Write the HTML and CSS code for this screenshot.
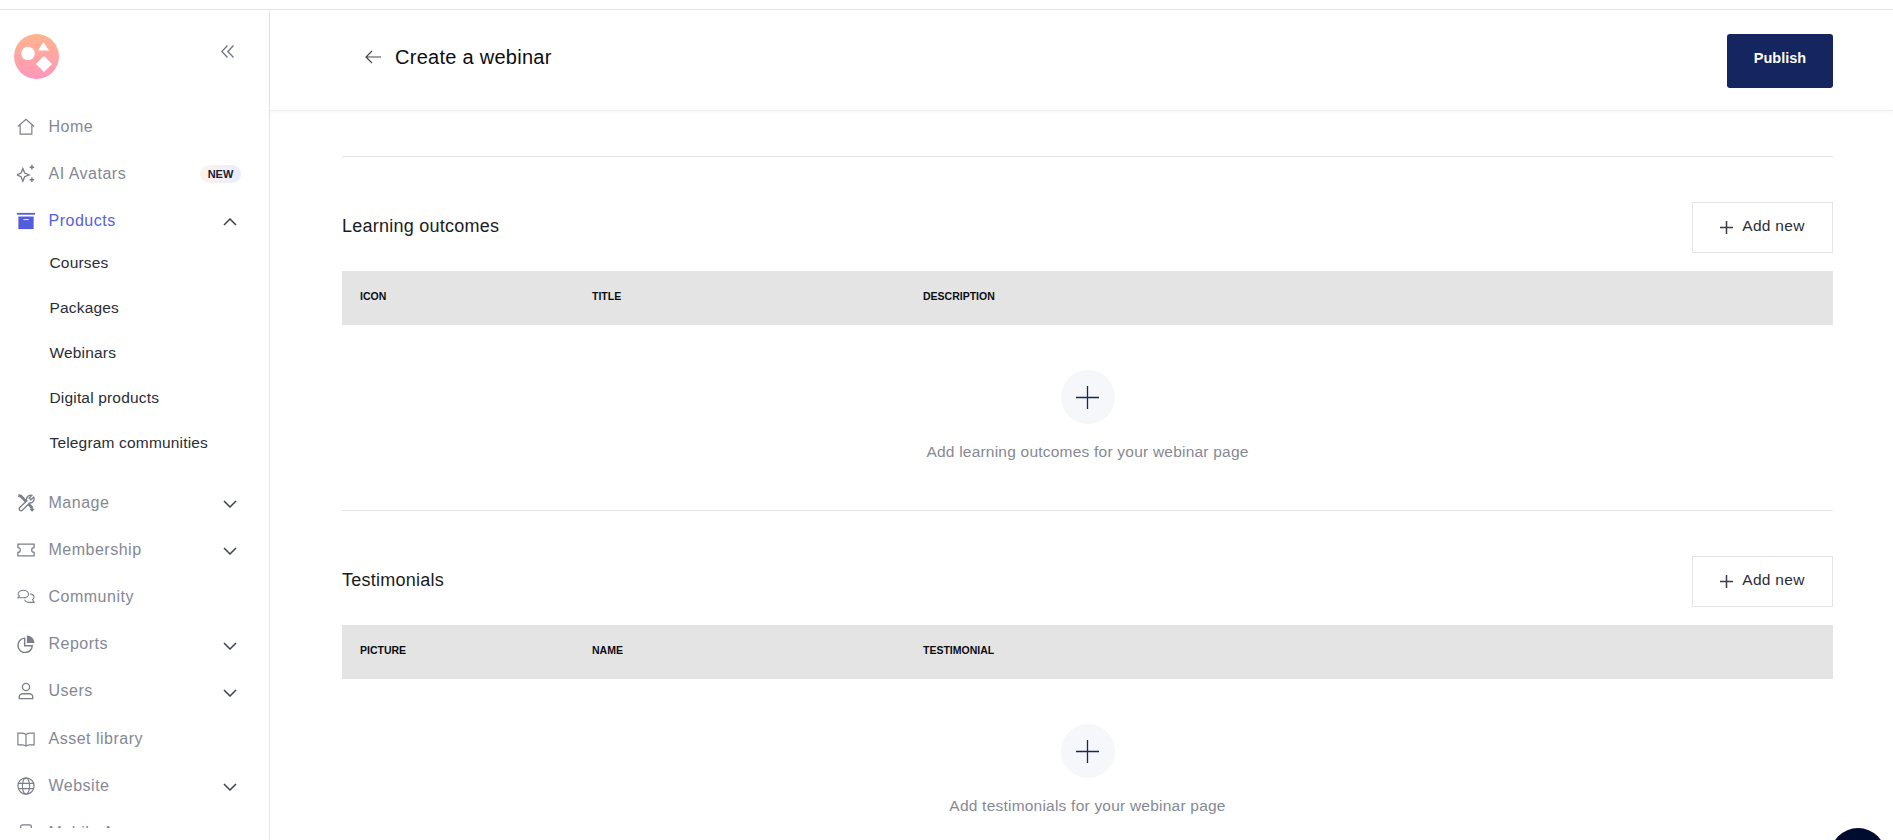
FILE: index.html
```html
<!DOCTYPE html>
<html lang="en">
<head>
<meta charset="utf-8">
<title>Create a webinar</title>
<link rel="stylesheet" href="styles.css">
</head>
<body>
<div class="app">
  <aside class="sidebar">
    <div class="brand">
      <svg class="logo" width="45" height="45" viewBox="0 0 45 45">
        <defs><linearGradient id="lg" x1="0" y1="0" x2="0" y2="1"><stop offset="0" stop-color="#ffb48c"/><stop offset="1" stop-color="#ff97bd"/></linearGradient></defs>
        <circle cx="22.5" cy="22.5" r="22.5" fill="url(#lg)"/>
        <circle cx="14" cy="19.500" r="6.800" fill="#fff"/>
        <path d="M29.500 8l5.500 8.500H24z" fill="#fff"/>
        <path d="M30 22l8 8-8 8-8-8z" fill="#fff"/>
      </svg>
      <svg class="collapse" width="13" height="13" viewBox="0 0 13 13" fill="none" stroke="#6f7480" stroke-width="1.300"><path d="M6.500 .5L.8 6.500l5.700 6M12.500 .5L6.800 6.500l5.700 6"/></svg>
    </div>
    <nav class="nav">
      <a class="item"><svg class="ico" viewBox="0 0 20 20" fill="none" stroke="#7b7f8a" stroke-width="1.300"><path d="M1 9.500L10 1.500l9 8M3.500 8v10h13V8"/></svg><span>Home</span></a>
      <a class="item"><svg class="ico" viewBox="0 0 20 20" fill="none" stroke="#7b7f8a" stroke-width="1.500"><path d="M6.500 4l2 5 5 2-5 2-2 5-2-5-5-2 5-2z"/><path d="M16.500 0v5M14 2.500h5M16.500 14v5M14 16.500h5" stroke-width="1.700"/></svg><span>AI Avatars</span><b class="badge">NEW</b></a>
      <a class="item active"><svg class="ico" viewBox="0 0 20 20"><path d="M0 1h20v2H0z" fill="#525ddc"/><path d="M1.500 5h17v14h-17z" fill="#525ddc"/><path d="M7 8h6v1H7z" fill="#fff"/></svg><span>Products</span><svg class="chev" viewBox="0 0 14 8" fill="none" stroke="#3c4152" stroke-width="1.500"><path d="M1 7l6-6 6 6"/></svg></a>
      <div class="sub">
        <a class="subitem">Courses</a>
        <a class="subitem">Packages</a>
        <a class="subitem">Webinars</a>
        <a class="subitem">Digital products</a>
        <a class="subitem">Telegram communities</a>
      </div>
      <a class="item"><svg class="ico" viewBox="0 0 20 20" fill="none" stroke="#7b7f8a"><path d="M1.500 1.500l3 1 12.500 13" stroke-width="3"/><path d="M15.500 16l2.500 2.500" stroke-width="3.500"/><path d="M18.500 3.500l-3 3-2-2 3-3a4.500 4.500 0 0 0-5.500 6L3 15a2 2 0 0 0 3 3l8-8a4.500 4.500 0 0 0 4.500-6.500z" stroke-width="1.500" fill="#fff"/></svg><span>Manage</span><svg class="chev" viewBox="0 0 14 8" fill="none" stroke="#3c4152" stroke-width="1.500"><path d="M1 1l6 6 6-6"/></svg></a>
      <a class="item"><svg class="ico" viewBox="0 0 20 20" fill="none" stroke="#7b7f8a" stroke-width="1.400"><path d="M1 3.500h18v3.800a2.700 2.700 0 0 0 0 5.400v3.800H1v-3.800a2.700 2.700 0 0 0 0-5.400z"/></svg><span>Membership</span><svg class="chev" viewBox="0 0 14 8" fill="none" stroke="#3c4152" stroke-width="1.500"><path d="M1 1l6 6 6-6"/></svg></a>
      <a class="item"><svg class="ico" viewBox="0 0 20 20" fill="none" stroke="#7b7f8a" stroke-width="1.200"><path d="M7 2.500c3.300 0 5.800 1.800 5.800 4.200s-2.500 4.200-5.800 4.200H1l1.700-2.100C1.700 8.100 1.200 7.400 1.200 6.700 1.200 4.300 3.700 2.500 7 2.500z"/><path d="M14.500 6.500c2.700.3 4.500 1.700 4.500 3.600 0 1.100-.6 2-1.700 2.700l1.700 3.200h-5.500c-2.500 0-4.500-1.200-5-3"/></svg><span>Community</span></a>
      <a class="item"><svg class="ico" viewBox="0 0 20 20" fill="none" stroke="#7b7f8a" stroke-width="1.600"><path d="M8.500 3.500a8 8 0 1 0 8.500 8.500H8.500z"/><path d="M11 .5a8.500 8.500 0 0 1 8.500 8.500H11z" fill="#7b7f8a" stroke="none"/></svg><span>Reports</span><svg class="chev" viewBox="0 0 14 8" fill="none" stroke="#3c4152" stroke-width="1.500"><path d="M1 1l6 6 6-6"/></svg></a>
      <a class="item"><svg class="ico" viewBox="0 0 20 20" fill="none" stroke="#7b7f8a" stroke-width="1.500"><circle cx="10" cy="5.500" r="4"/><path d="M2.500 18.500v-2c0-2 2-3.500 4-3.500h7c2 0 4 1.500 4 3.500v2z"/></svg><span>Users</span><svg class="chev" viewBox="0 0 14 8" fill="none" stroke="#3c4152" stroke-width="1.500"><path d="M1 1l6 6 6-6"/></svg></a>
      <a class="item"><svg class="ico" viewBox="0 0 20 20" fill="none" stroke="#7b7f8a" stroke-width="1.300"><path d="M10 5c-1.500-1-3-1.500-5-1.500H1v13h5c1.600 0 3 .5 4 1.500 1-1 2.400-1.500 4-1.500h5v-13h-4c-2 0-3.500.5-5 1.500zM10 5v12"/></svg><span>Asset library</span></a>
      <a class="item"><svg class="ico" viewBox="0 0 20 20" fill="none" stroke="#7b7f8a" stroke-width="1.300"><circle cx="10" cy="10" r="9"/><ellipse cx="10" cy="10" rx="4" ry="9"/><path d="M1.500 7h17M1.500 13h17"/></svg><span>Website</span><svg class="chev" viewBox="0 0 14 8" fill="none" stroke="#3c4152" stroke-width="1.500"><path d="M1 1l6 6 6-6"/></svg></a>
      <a class="item"><svg class="ico" viewBox="0 0 20 20" fill="none" stroke="#7b7f8a" stroke-width="1.400"><rect x="4" y="1" width="12" height="18" rx="2"/></svg><span>Mobile App</span></a>
    </nav>
  </aside>
  <main class="main">
    <header class="topbar">
      <div class="title">
        <svg class="back" width="16" height="14" viewBox="0 0 16 14" fill="none" stroke="#444850" stroke-width="1.200"><path d="M7 1L1 7l6 6M1 7h15"/></svg>
        <h1>Create a webinar</h1>
      </div>
      <button class="publish">Publish</button>
    </header>
    <div class="content">
      <section class="block">
        <div class="block-head">
          <h2>Learning outcomes</h2>
          <button class="add"><svg width="13" height="13" viewBox="0 0 13 13" stroke="#3a3d45" stroke-width="1.500"><path d="M6.500 0v13M0 6.500h13"/></svg><span class="add-label">Add new</span></button>
        </div>
        <div class="thead"><span>ICON</span><span>TITLE</span><span>DESCRIPTION</span></div>
        <div class="empty">
          <div class="circle"><svg width="23" height="23" viewBox="0 0 23 23" stroke="#1b2560" stroke-width="1.300"><path d="M11.500 0v23M0 11.500h23"/></svg></div>
          <p>Add learning outcomes for your webinar page</p>
        </div>
      </section>
      <section class="block">
        <div class="block-head">
          <h2>Testimonials</h2>
          <button class="add"><svg width="13" height="13" viewBox="0 0 13 13" stroke="#3a3d45" stroke-width="1.500"><path d="M6.500 0v13M0 6.500h13"/></svg><span class="add-label">Add new</span></button>
        </div>
        <div class="thead"><span>PICTURE</span><span>NAME</span><span>TESTIMONIAL</span></div>
        <div class="empty">
          <div class="circle"><svg width="23" height="23" viewBox="0 0 23 23" stroke="#1b2560" stroke-width="1.300"><path d="M11.500 0v23M0 11.500h23"/></svg></div>
          <p>Add testimonials for your webinar page</p>
        </div>
      </section>
    </div>
  </main>
</div>
<div class="chat"></div>
</body>
</html>
```
FILE: styles.css
```css
* { box-sizing: border-box; }
html, body { margin: 0; height: 100%; overflow: hidden; background: #fff; }
body { font-family: "Liberation Sans", Arial, sans-serif; color: #14161c; padding-top: 9px; }
h1, h2, p { margin: 0; font-weight: 400; }
.app { display: flex; height: 831px; border-top: 1px solid #e4e4e4; }
.sidebar { width: 270px; flex: none; border-right: 1px solid #e4e4e4; padding-bottom: 12px; display: flex; flex-direction: column; margin-top: 1px; }
.brand { height: 92px; flex: none; display: flex; align-items: flex-start; justify-content: space-between; padding: 23px 35px 0 14px; }
.collapse { margin-top: 11px; }
.nav { flex: 1; overflow: hidden; }
.item { display: flex; align-items: center; height: 47.200px; padding: 0 32px 0 17px; font-size: 16px; letter-spacing: .5px; color: #848894; }
.ico { width: 18px; height: 18px; flex: none; margin-right: 13.500px; }
.item span { flex: 1; }
.chev { width: 14px; height: 8px; flex: none; margin-top: 3px; }
.active { color: #5660e2; }
.badge { width: 41px; height: 18px; line-height: 18px; margin-right: -4px; text-align: center; border-radius: 9px; font-size: 11px; letter-spacing: 0; color: #1c2030; background: linear-gradient(90deg, #fdf3ea, #e8edfd); }
.sub { margin: -4px 0 13.500px; }
.subitem { display: flex; align-items: center; height: 45px; padding-left: 49.500px; font-size: 15.500px; letter-spacing: .17px; color: #2a2d36; }
.main { flex: 1; min-width: 0; }
.topbar { height: 101px; display: flex; align-items: flex-start; justify-content: space-between; padding: 24px 60px 0 95px; border-bottom: 1px solid #eee; box-shadow: 0 2px 4px rgba(0,0,0,.03); }
.title { display: flex; align-items: center; height: 32px; gap: 14px; margin-top: 7px; }
h1 { font-size: 20px; letter-spacing: .27px; color: #0c0d12; }
.publish { width: 106px; height: 54px; border: 0; border-radius: 3px; padding: 0 0 6px; background: #15255f; color: #fff; font: 700 14.500px "Liberation Sans", Arial, sans-serif; }
.content { padding: 0 60px 0 72px; margin-top: 45px; }
.block { border-top: 1px solid #e4e4e4; padding-top: 45px; height: 354px; }
.block-head { display: flex; align-items: center; justify-content: space-between; height: 51px; }
h2 { font-size: 18px; letter-spacing: .25px; padding-bottom: 2px; color: #1a1c22; }
.add { display: flex; align-items: center; justify-content: center; gap: 9px; width: 141px; height: 51px; padding: 0; border: 1px solid #e4e4e4; background: #fff; color: #2a2d36; font: 15.500px "Liberation Sans", Arial, sans-serif; letter-spacing: .3px; }
.add-label { padding-bottom: 4px; }
.thead { display: grid; grid-template-columns: 232px 331px 1fr; align-items: center; height: 54px; margin-top: 18px; padding: 0 0 5px 18px; background: #e4e4e4; font-size: 10.500px; font-weight: 700; color: #0c0d12; }
.empty { display: flex; flex-direction: column; align-items: center; padding-top: 45px; }
.circle { width: 54px; height: 54px; border-radius: 50%; background: #f5f7fa; display: flex; align-items: center; justify-content: center; }
.empty p { margin-top: 18px; font-size: 15.500px; line-height: 20px; letter-spacing: .22px; color: #858993; }
.chat { position: fixed; left: 1830px; top: 828px; width: 56px; height: 56px; border-radius: 50%; background: #000b30; }
```
